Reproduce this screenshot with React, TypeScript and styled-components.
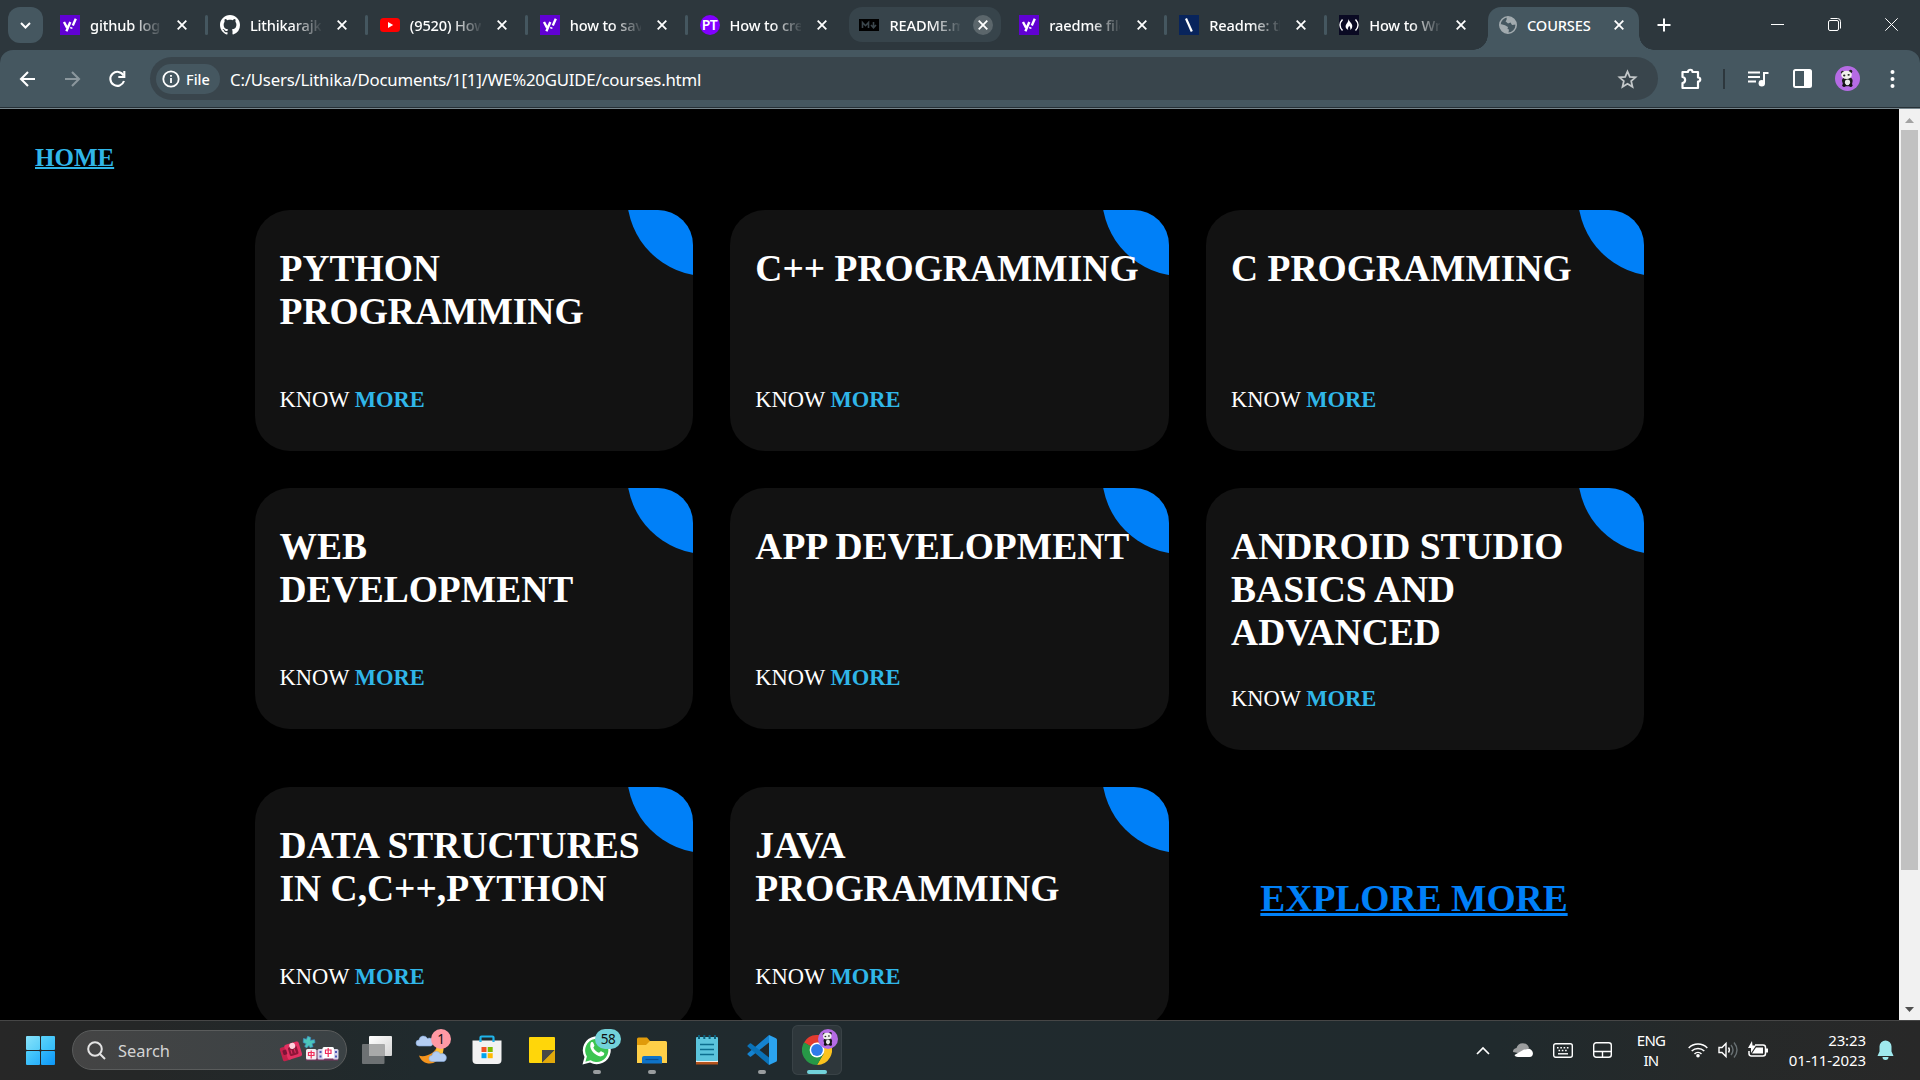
import React from "react";
import styled, { createGlobalStyle } from "styled-components";

const ui = `"Noto Sans", "Open Sans", sans-serif`;

const Global = createGlobalStyle`
  html, body { margin: 0; padding: 0; background: #000; overflow: hidden; }
  * { box-sizing: border-box; }
  svg { display: block; flex: none; }
`;

const Screen = styled.div`
  width: 1920px;
  height: 1080px;
  display: flex;
  flex-direction: column;
  overflow: hidden;
  background: #2d373d;
  font-family: ${ui};
  color: #fff;
`;

/* ---------- tab strip ---------- */
const TabStrip = styled.header`
  height: 50px;
  flex: none;
  display: flex;
  align-items: flex-start;
  padding-left: 8px;
`;
const TabSearch = styled.button`
  width: 35px;
  height: 36px;
  margin: 7px 7px 0 0;
  padding: 0;
  border: 0;
  border-radius: 12px;
  background: #455760;
  display: flex;
  align-items: center;
  justify-content: center;
`;
const TabBox = styled.div<{ $hover?: boolean }>`
  width: 152px;
  height: 35px;
  margin: 7px 7.9px 0 0;
  padding-left: 10px;
  border-radius: 13px;
  background: ${(p) => (p.$hover ? "#37444b" : "transparent")};
  display: flex;
  align-items: center;
  flex: none;
`;
const ActiveTab = styled.div`
  position: relative;
  width: 151px;
  height: 43px;
  margin-top: 7px;
  margin-left: -1px;
  padding: 0 0 7px 11px;
  border-radius: 13px 13px 0 0;
  background: #455760;
  display: flex;
  align-items: center;
  flex: none;
  &::before, &::after {
    content: "";
    position: absolute;
    bottom: 0;
    width: 15px;
    height: 15px;
  }
  &::before {
    left: -15px;
    background: radial-gradient(circle at 0 0, transparent 14.5px, #455760 15px);
  }
  &::after {
    right: -15px;
    background: radial-gradient(circle at 100% 0, transparent 14.5px, #455760 15px);
  }
`;
const TabLabel = styled.span<{ $full?: boolean }>`
  width: 71px;
  margin-left: 10px;
  overflow: hidden;
  white-space: nowrap;
  font-size: 14.6px;
  line-height: 20px;
  font-weight: 500;
  letter-spacing: ${(p) => (p.$full ? "-0.15px" : "-0.15px")};
  ${(p) => (p.$full ? "" : "mask-image: linear-gradient(90deg, #000 42px, transparent 73px);")}
`;
const CloseDot = styled.span<{ $hover?: boolean }>`
  width: 20px;
  height: 20px;
  margin-left: ${(p) => (p.$hover ? "12.5px" : "11.2px")};
  border-radius: 50%;
  background: ${(p) => (p.$hover ? "#5b666b" : "transparent")};
  display: flex;
  align-items: center;
  justify-content: center;
`;
const Divider = styled.i<{ $hidden?: boolean }>`
  width: 3px;
  height: 20px;
  margin-right: -6px;
  margin-left: auto;
  border-radius: 2px;
  background: ${(p) => (p.$hidden ? "transparent" : "#455760")};
`;
const NewTab = styled.div`
  margin: 18px 0 0 18px;
`;
const WindowButtons = styled.div`
  margin: 18px 22px 0 auto;
  display: flex;
  gap: 44px;
`;

/* ---------- favicons ---------- */
const Favicon = styled.span<{ $bg: string; $round?: boolean; $size: number }>`
  width: 20px;
  height: 20px;
  flex: none;
  border-radius: ${(p) => (p.$round ? "50%" : "0")};
  background: ${(p) => p.$bg};
  font: 600 ${(p) => p.$size}px/20px ${ui};
  letter-spacing: -0.6px;
  text-align: center;
  display: flex;
  align-items: center;
  justify-content: center;
`;

/* ---------- toolbar ---------- */
const Toolbar = styled.div`
  height: 59px;
  flex: none;
  display: flex;
  align-items: center;
  padding: 0 18px 1px 17px;
  border-radius: 13px 13px 0 0;
  background: #455760;
  border-bottom: 1px solid #76858c;
  box-shadow: inset 0 -1px 0 #263036;
`;
const NavIcons = styled.div`
  width: 133px;
  flex: none;
  display: flex;
  gap: 21.5px;
  align-items: center;
`;
const AddressBar = styled.div`
  width: 1508px;
  height: 43px;
  flex: none;
  display: flex;
  align-items: center;
  padding: 0 20px 0 6px;
  border-radius: 22px;
  background: #39454c;
`;
const FileChip = styled.div`
  width: 64px;
  height: 30px;
  padding-left: 6px;
  border-radius: 15px;
  background: #455760;
  display: flex;
  align-items: center;
  gap: 6px;
  font-size: 14.5px;
  font-weight: 500;
`;
const Url = styled.span`
  flex: 1;
  margin-left: 10px;
  padding-top: 1px;
  font-size: 16.8px;
  letter-spacing: -0.2px;
  white-space: nowrap;
`;
const ToolIcons = styled.div`
  flex: 1;
  display: flex;
  align-items: center;
  padding-left: 21px;
`;
const ToolDivider = styled.i`
  width: 2px;
  height: 20px;
  margin: 0 23px 0 20px;
  background: #2d373d;
`;
const ToolSlot = styled.span<{ $gap: number }>`
  margin-left: ${(p) => p.$gap}px;
`;

/* ---------- page ---------- */
const Viewport = styled.div`
  height: 911px;
  flex: none;
  display: flex;
  overflow: hidden;
  background: #000;
`;
const Page = styled.main`
  width: 1899px;
  height: 911px;
  overflow: hidden;
  font-family: "Liberation Serif", "Times New Roman", serif;
`;
const HomeLink = styled.a`
  display: block;
  width: max-content;
  height: 29px;
  margin: 34px 0 37.9px 35px;
  font-size: 25px;
  line-height: 29px;
  font-weight: 700;
  color: #30b6e8;
  text-decoration: underline 2px;
`;
const Courses = styled.section`
  width: 1427.5px;
  margin: 0 auto;
  display: flex;
  flex-wrap: wrap;
  align-items: flex-start;
`;
const Card = styled.article`
  position: relative;
  width: 438.3px;
  margin: 0 18.75px 37.5px;
  padding: 37px 25px 38.2px;
  border-radius: 35px;
  overflow: hidden;
  background: #121212;
`;
const Bubble = styled.i`
  position: absolute;
  top: -93.75px;
  right: -93.75px;
  width: 160px;
  height: 160px;
  border-radius: 50%;
  background: #0080f8;
`;
const CardTitle = styled.h2`
  position: relative;
  min-height: 108.75px;
  margin: 0 0 31.25px;
  font-size: 37.5px;
  line-height: 43.2px;
  font-weight: 700;
`;
const Know = styled.p`
  position: relative;
  margin: 0;
  font-size: 22.5px;
  line-height: 25.5px;
  b { color: #30b6e8; }
`;
const Explore = styled.a`
  margin: 90.2px 0 0 73px;
  font-size: 37.5px;
  line-height: 43.2px;
  font-weight: 700;
  color: #0080f8;
  text-decoration: underline 3px;
`;
const Scrollbar = styled.aside`
  width: 21px;
  display: flex;
  flex-direction: column;
  align-items: center;
  justify-content: space-between;
  background: #f1f1f1;
  padding: 9px 0 8px;
`;
const Thumb = styled.i`
  width: 17px;
  height: 740px;
  margin-bottom: auto;
  margin-top: 7px;
  background: #c1c1c1;
`;

/* ---------- taskbar ---------- */
const Taskbar = styled.footer`
  height: 60px;
  flex: none;
  display: flex;
  align-items: center;
  padding-bottom: 1px;
  border-top: 1px solid #464646;
  background: linear-gradient(90deg, #272727 0, #252727 140px, #202a2d 420px, #202a2e 800px, #202a2d 1500px, #262929 1720px, #282828 1920px);
`;
const Start = styled.div`
  width: 29px;
  height: 29px;
  margin: 0 17px 0 26px;
  display: grid;
  grid-template-columns: 1fr 1fr;
  gap: 1px;
  flex: none;
  i { border-radius: 1px; }
  i:nth-child(1) { background: linear-gradient(135deg, #86e2fb, #56cdf9); }
  i:nth-child(2) { background: linear-gradient(135deg, #5bd2fa, #32bbfa); }
  i:nth-child(3) { background: linear-gradient(135deg, #4fcffb, #28aefa); }
  i:nth-child(4) { background: linear-gradient(135deg, #33b9fb, #0d97f8); }
`;
const SearchBox = styled.div`
  width: 275px;
  height: 40px;
  flex: none;
  display: flex;
  align-items: center;
  padding: 0 7px 0 14px;
  border-radius: 20px;
  border: 1px solid #5a5c5c;
  background: linear-gradient(90deg, #444444, #3b4245);
  font-size: 16.4px;
  color: #d4d4d4;
  span { flex: 1; margin-left: 12px; }
`;
const Apps = styled.div`
  display: flex;
  margin-left: 2.5px;
`;
const AppSlot = styled.div<{ $active?: boolean }>`
  position: relative;
  width: 50px;
  height: 50px;
  margin: 0 2.5px;
  border-radius: 6px;
  background: ${(p) => (p.$active ? "#2e373b" : "transparent")};
  box-shadow: ${(p) => (p.$active ? "inset 0 0 0 1px #394246" : "none")};
  display: flex;
  align-items: center;
  justify-content: center;
`;
const Running = styled.i<{ $active?: boolean }>`
  position: absolute;
  bottom: 1px;
  left: ${(p) => (p.$active ? "15px" : "21px")};
  width: ${(p) => (p.$active ? "20px" : "8px")};
  height: 4px;
  border-radius: 2px;
  background: ${(p) => (p.$active ? "#72d2da" : "#999d9f")};
`;
const Badge = styled.b<{ $color: string; $w: number; $x: number; $y: number }>`
  position: absolute;
  top: ${(p) => p.$y}px;
  left: ${(p) => p.$x}px;
  width: ${(p) => p.$w}px;
  height: 20px;
  border-radius: 10px;
  background: ${(p) => p.$color};
  color: #111;
  font: 400 13.5px/20px ${ui};
  letter-spacing: -0.4px;
  text-align: center;
`;
const AvatarBadge = styled.span`
  position: absolute;
  top: 4px;
  left: 26px;
`;
const Tray = styled.div`
  margin-left: auto;
  display: flex;
  align-items: center;
  padding-right: 26px;
  font-size: 15px;
  line-height: 20px;
`;
const Language = styled.div`
  width: 34px;
  margin: 0 20px 0 13px;
  text-align: center;
  letter-spacing: -0.8px;
`;
const Clock = styled.div`
  width: 84px;
  margin: 0 11px 0 14px;
  display: flex;
  flex-direction: column;
  align-items: flex-end;
  white-space: nowrap;
  letter-spacing: -0.1px;
`;
const TraySlot = styled.span<{ $w: number }>`
  width: ${(p) => p.$w}px;
  display: flex;
  justify-content: center;
`;

const line = { fill: "none", stroke: "#fff", strokeLinecap: "butt" as const };

const Cross = () => (
  <svg width="10" height="10" viewBox="0 0 10 10" {...line} strokeWidth="1.8"><path d="M.7.7l8.6 8.6M9.3.7L.7 9.3" /></svg>
);
const Github = () => (
  <svg width="20" height="20" viewBox="0 0 16 16" fill="#fff">
    <path d="M8 0C3.58 0 0 3.58 0 8c0 3.54 2.29 6.53 5.47 7.59.4.07.55-.17.55-.38 0-.19-.01-.82-.01-1.49-2.01.37-2.53-.49-2.69-.94-.09-.23-.48-.94-.82-1.13-.28-.15-.68-.52-.01-.53.63-.01 1.08.58 1.23.82.72 1.21 1.87.87 2.33.66.07-.52.28-.87.51-1.07-1.78-.2-3.64-.89-3.64-3.95 0-.87.31-1.59.82-2.15-.08-.2-.36-1.02.08-2.12 0 0 .67-.21 2.2.82.64-.18 1.32-.27 2-.27s1.36.09 2 .27c1.53-1.04 2.2-.82 2.2-.82.44 1.1.16 1.92.08 2.12.51.56.82 1.27.82 2.15 0 3.07-1.87 3.75-3.65 3.95.29.25.54.73.54 1.48 0 1.07-.01 1.93-.01 2.2 0 .21.15.46.55.38A8.01 8.01 0 0 0 16 8c0-4.42-3.58-8-8-8z" />
  </svg>
);
const Youtube = () => (
  <svg width="20" height="20" viewBox="0 0 20 20"><rect y="3" width="20" height="14" rx="3.5" fill="#f00" /><path d="M8 7l5.2 3L8 13z" fill="#fff" /></svg>
);
const Yahoo = () => (
  <Favicon $bg="#6001d2" $size={15}>
    <svg width="20" height="20" viewBox="0 0 20 20" {...line} strokeWidth="2.4"><path d="M4 7l3 5.6M10.3 7L6.4 16.2M15.8 3.8l-3 6.6M11.6 12.2l-.6 1.4" /></svg>
  </Favicon>
);
const Markdown = () => (
  <svg width="20" height="20" viewBox="0 0 20 20">
    <rect y="4" width="20" height="12" fill="#000" />
    <path d="M3.5 13V7.5l3 3.2 3-3.2V13M14.5 7v5M12 10l2.5 2.8L17 10" fill="none" stroke="#3c484e" strokeWidth="1.6" />
  </svg>
);
const Slash = () => (
  <Favicon $bg="#08245c" $size={12}>
    <svg width="20" height="20" viewBox="0 0 20 20"><path d="M7 3.5l5.8 13" stroke="#fff" strokeWidth="2.2" /></svg>
  </Favicon>
);
const Camp = () => (
  <Favicon $bg="#0a0a23" $size={12}>
    <svg width="20" height="20" viewBox="0 0 20 20" {...line} strokeWidth="1.4">
      <path d="M3.500 4.500C.3 8 .3 12 3.500 15.500M16.500 4.500C19.700 8 19.700 12 16.500 15.500" />
      <path d="M9.500 4c.5 3 4.500 4.500 3.700 8-.3 1.700-1.500 2.600-2.200 2.800 1-2-.2-3-.8-4-.6 1.500-2 2.500-.9 4-1.800-.5-3.200-2-2.600-4.200C7.300 8.500 9.500 7 9.500 4z" fill="#fff" stroke="none" />
    </svg>
  </Favicon>
);
const Globe = () => (
  <svg width="18" height="18" viewBox="0 0 18 18">
    <circle cx="9" cy="9" r="8.200" fill="#455760" stroke="#a2abaf" strokeWidth="1.600" />
    <path d="M1.500 8l4.500 1.200 3 1.800-.5 2 1.500.5-.6 3.700C5 17.500 1 14 1 9zM8 1c-.8 1.500.5 2.500-1.500 4.300L9 7.500l2.500-1 1.500 2.500 4-.5C16.500 3.500 13 .5 8 1z" fill="#a2abaf" />
  </svg>
);
const Panda = ({ size }: { size: number }) => (
  <svg width={size} height={size} viewBox="0 0 26 26">
    <circle cx="13" cy="13" r="13" fill="#b56be4" />
    <path d="M7.500 16.500c-1-3 1.500-4.500 3.500-4.500h4c3 0 4 3 3 5.500l-.8 3.500H9z" fill="#1a1a1a" />
    <circle cx="8" cy="6.800" r="1.800" fill="#222" /><circle cx="16.200" cy="5.800" r="1.800" fill="#222" />
    <ellipse cx="12" cy="9.300" rx="5.500" ry="4.300" fill="#f0f0ec" />
    <ellipse cx="9.600" cy="9.800" rx="1.200" ry="1" fill="#222" /><ellipse cx="14.200" cy="9.200" rx="1.200" ry="1" fill="#222" />
    <ellipse cx="13" cy="17" rx="2.700" ry="3" fill="#e6e6e6" />
    <circle cx="9.400" cy="20" r="1.800" fill="#111" /><circle cx="16.400" cy="20" r="1.800" fill="#111" />
  </svg>
);

const tabs = [
  { icon: <Yahoo />, label: "github log" },
  { icon: <Github />, label: "Lithikarajk" },
  { icon: <Youtube />, label: "(9520) How" },
  { icon: <Yahoo />, label: "how to sav" },
  { icon: <Favicon $bg="#8200ff" $round $size={14}>PT</Favicon>, label: "How to cre", last: true },
  { icon: <Markdown />, label: "README.m", hover: true, last: true },
  { icon: <Yahoo />, label: "raedme file" },
  { icon: <Slash />, label: "Readme: th" },
  { icon: <Camp />, label: "How to Wr", last: true },
];

const courses = [
  "PYTHON PROGRAMMING",
  "C++ PROGRAMMING",
  "C PROGRAMMING",
  "WEB DEVELOPMENT",
  "APP DEVELOPMENT",
  "ANDROID STUDIO BASICS AND ADVANCED",
  "DATA STRUCTURES IN C,C++,PYTHON",
  "JAVA PROGRAMMING",
];

const Games = () => (
  <svg width="60" height="30" viewBox="0 0 60 30">
    <g transform="rotate(-17 12 17)">
      <rect x="2" y="10" width="9" height="14" rx="1.500" fill="#c4214b" />
      <rect x="7" y="8.500" width="15" height="15.500" rx="2" fill="#e33162" />
      <rect x="4" y="13" width="4" height="5" rx="1" fill="#7b1437" />
      <rect x="10" y="12" width="9" height="9" rx="1.500" fill="#8d1638" />
      <path d="M12.500 15v4M16 15v4" stroke="#e33162" strokeWidth="1" />
      <circle cx="15" cy="11.500" r="3" fill="#ffd1dc" />
    </g>
    <path d="M24.500 3.500l3 .8 1.200-3 3 1.200-.4 2.800 4.200-.6.500 3-3 1 1 3-3 .8-1-2-2.500 2.500-1.800-1.800 1.500-2.500-3-1.200z" fill="#4cc6bb" stroke="#3b8fc4" strokeWidth=".7" />
    <path d="M27 15h32v10.500H27z" fill="#79355f" />
    <rect x="27" y="14" width="10.500" height="10.500" rx="1.500" fill="#f5eef3" />
    <rect x="38.500" y="14" width="7" height="10.500" rx="1.500" fill="#d5d3ea" />
    <rect x="54" y="14" width="5.500" height="10.500" rx="1.500" fill="#d5d3ea" />
    <rect x="43.500" y="12" width="11.500" height="11.500" rx="1.500" fill="#fff" />
    <path d="M29.500 17.500h5.500v3h-5.500zM32.200 15.500v8M46.500 15h5.500v3.500h-5.500zM49.200 13v9" fill="none" stroke="#f02c5b" strokeWidth="1.200" />
    <path d="M40.500 17h2M40.500 21.500h2M56 17h2M56 21.500h2" stroke="#4e58b5" strokeWidth="2" />
  </svg>
);

const TaskView = () => (
  <svg width="30" height="28" viewBox="0 0 30 28">
    <defs><linearGradient id="tv" x2="1" y2="1"><stop stopColor="#fff" /><stop offset="1" stopColor="#d4d4d4" /></linearGradient></defs>
    <rect x="7" y="0" width="23" height="20" rx="1" fill="url(#tv)" />
    <rect x="0" y="8" width="22.500" height="20" rx="1" fill="#6d7173" /><path d="M7 8h15.500v12H7z" fill="#a8a9a9" />
  </svg>
);
const Cloud = ({ x, y }: { x: number; y: number }) => (
  <path transform={`translate(${x} ${y})`} d="M3 11a3 3 0 0 1 0-6A4.500 4.500 0 0 1 11.500 3.500 3.800 3.800 0 0 1 15 11z" fill="#b3cdf2" stroke="#87a9dc" strokeWidth=".6" />
);
const Weather = () => (
  <svg width="34" height="34" viewBox="0 0 34 34">
    <Cloud x={1} y={2} />
    <path d="M28 12c2 8-4 18-13 18.500-5 0-9-2.500-11-8 3 1.500 9 .5 13-2.500s5-5.500 5-8z" fill="#f5941d" />
    <path d="M28 12c1 5 0 9-2 12l-7-3c2-2.500 3-5.500 3-9z" fill="#fdc33c" />
    <Cloud x={14} y={17.500} />
  </svg>
);
const Store = () => (
  <svg width="30" height="30" viewBox="0 0 30 30">
    <path d="M.5 5.500h29V25a4 4 0 0 1-4 4h-21a4 4 0 0 1-4-4z" fill="#f2f2f2" />
    <path d="M8.500 7V2.500a1 1 0 0 1 1-1h11a1 1 0 0 1 1 1V7" fill="none" stroke="#1fb4ea" strokeWidth="2.200" />
    <path d="M9.500 12h5v5h-5z" fill="#f25022" /><path d="M15.700 12h5v5h-5z" fill="#7fba00" />
    <path d="M9.500 18.200h5v5h-5z" fill="#00a4ef" /><path d="M15.700 18.200h5v5h-5z" fill="#ffb900" />
  </svg>
);
const Sticky = () => (
  <svg width="26" height="26" viewBox="0 0 26 26"><rect width="26" height="26" rx="1" fill="#ffd60a" /><path d="M13 13h13L13 26z" fill="#474747" /><path d="M26 13v13H13z" fill="#e2a90b" /></svg>
);
const Whatsapp = () => (
  <svg width="30" height="30" viewBox="0 0 30 30">
    <path d="M.5 29.500l2-7.500A14 14 0 1 1 8 27.500z" fill="#fff" />
    <path d="M3.400 26.700l1.500-5.200A11.600 11.600 0 1 1 8.600 25.200z" fill="#3cc551" />
    <path d="M9 7.500c1-.8 2-.6 2.400.4l1 2.600c.2.700-1.200 1.800-1 2.200 1.200 2.500 3 4 5.500 5 .6.200 1.500-1.700 2.200-1.400l2.800 1.400c.8.400.2 2.200-.7 2.900-5 3.500-14.500-5.500-12.800-11 .1-.8.2-1.700.6-2.100z" fill="#fff" />
  </svg>
);
const Folder = () => (
  <svg width="30" height="27" viewBox="0 0 30 27">
    <path d="M0 2a1.500 1.500 0 0 1 1.500-1.500H10L13 4v4H0z" fill="#e09b0b" />
    <path d="M0 8h9l4-4h15.500A1.500 1.500 0 0 1 30 5.500V26H0z" fill="#ffcf48" />
    <path d="M5 26.500V21a2 2 0 0 1 2-2h16a2 2 0 0 1 2 2v5.500z" fill="#0f73c8" /><path d="M8.500 22.500h13" stroke="#0a4f93" strokeWidth="1.200" />
  </svg>
);
const Notepad = () => (
  <svg width="22" height="30" viewBox="0 0 22 30">
    <path d="M0 25h22v4.500H0z" fill="#b5531c" /><path d="M0 25h22v2H0z" fill="#f2ece6" />
    <rect y="2" width="22" height="24" rx="1" fill="#5bc4dc" />
    <path d="M3 0v4M8.300 0v4M13.600 0v4M19 0v4" stroke="#0d5f7a" strokeWidth="2" />
    <path d="M4 9.500h14M4 14.500h14M4 19.500h14" stroke="#0c6e8e" strokeWidth="1.700" />
  </svg>
);
const Code = () => (
  <svg width="30" height="30" viewBox="0 0 30 30">
    <path d="M22 7.500V0L.8 18.200a1 1 0 0 0 0 1.500l2 1.700a1 1 0 0 0 1.300 0z" fill="#1583d0" />
    <path d="M22 22.500V30L.8 11.800a1 1 0 0 1 0-1.500l2-1.700a1 1 0 0 1 1.300 0z" fill="#0a72b8" />
    <path d="M22 0l6.500 3a2 2 0 0 1 1.500 2v20a2 2 0 0 1-1.500 2L22 30z" fill="#2ba3ef" />
  </svg>
);
const Chrome = () => (
  <svg width="30" height="30" viewBox="0 0 30 30">
    <path d="M15 15L2 7.500A15 15 0 0 1 28 7.500z" fill="#e33b2e" /><path d="M15 15L2 7.500A15 15 0 0 0 15 30z" fill="#279847" />
    <path d="M15 7.500h13A15 15 0 0 1 15 30l6.500-11.200z" fill="#fcc31e" /><path d="M2 7.500l6.500 11.300L15 30l6.600-11.200L15 15z" fill="#279847" />
    <circle cx="15" cy="15" r="7.400" fill="#fff" /><circle cx="15" cy="15" r="5.900" fill="#2f7bea" />
  </svg>
);

export default function App() {
  return (
    <>
      <Global />
      <Screen>
        <TabStrip>
          <TabSearch><svg width="11" height="7" viewBox="0 0 11 7" {...line} strokeWidth="2"><path d="M1 1l4.500 4.500L10 1" /></svg></TabSearch>
          {tabs.map((t, i) => (
            <TabBox key={i} $hover={t.hover}>
              {t.icon}
              <TabLabel>{t.label}</TabLabel>
              <CloseDot $hover={t.hover}><Cross /></CloseDot>
              <Divider $hidden={t.last} />
            </TabBox>
          ))}
          <ActiveTab>
            <Globe />
            <TabLabel $full>COURSES</TabLabel>
            <CloseDot><Cross /></CloseDot>
          </ActiveTab>
          <NewTab><svg width="14" height="14" viewBox="0 0 14 14" {...line} strokeWidth="2"><path d="M7 .5v13M.5 7h13" /></svg></NewTab>
          <WindowButtons>
            <svg width="13" height="13" viewBox="0 0 13 13" {...line}><path d="M0 6.500h13" /></svg>
            <svg width="13" height="13" viewBox="0 0 13 13" {...line}><rect x=".5" y="2.500" width="10" height="10" rx="1.500" /><path d="M2.500.5h7a3 3 0 0 1 3 3v7" /></svg>
            <svg width="13" height="13" viewBox="0 0 13 13" {...line}><path d="M.3.3l12.400 12.400M12.700.3L.3 12.700" /></svg>
          </WindowButtons>
        </TabStrip>

        <Toolbar>
          <NavIcons>
            <svg width="22" height="22" viewBox="0 0 22 22" {...line} strokeWidth="2.100"><path d="M18 11H4.500M11 4l-7 7 7 7" /></svg>
            <svg width="22" height="22" viewBox="0 0 22 22" {...line} stroke="#8b979d" strokeWidth="2.100"><path d="M4 11h13.500M11 4l7 7-7 7" /></svg>
            <svg width="26" height="22" viewBox="0 0 26 22" {...line} strokeWidth="2.100"><path d="M19.500 7.500A7 7 0 1 0 20 13" /><path d="M20.300 3v6h-6" /></svg>
          </NavIcons>
          <AddressBar>
            <FileChip>
              <svg width="18" height="18" viewBox="0 0 18 18" {...line} strokeWidth="1.800"><circle cx="9" cy="9" r="7.700" /><path d="M9 8v5M9 5v1.800" /></svg>
              File
            </FileChip>
            <Url>C:/Users/Lithika/Documents/1[1]/WE%20GUIDE/courses.html</Url>
            <svg width="21" height="20" viewBox="0 0 21 20" fill="none" stroke="#c3c7c9" strokeWidth="1.800"><path d="M10.500 2.500l2.300 5.300 5.700.5-4.300 3.800 1.300 5.700-5-3-5 3 1.300-5.700L2.500 8.300l5.700-.5z" /></svg>
          </AddressBar>
          <ToolIcons>
            <svg width="24" height="24" viewBox="0 0 24 24" {...line} strokeWidth="2.200"><path d="M3.500 5h5.500c0-3 4.500-3 4.500 0H19v5.500c3 0 3 4 0 4V21H3.500v-5c3.500-.5 3.500-5.500 0-6z" strokeLinejoin="round" /></svg>
            <ToolDivider />
            <svg width="21" height="18" viewBox="0 0 21 18" {...line} strokeWidth="2"><path d="M0 2.500h12M0 7h12M0 11.500h8M16 13.500V3h4.500" /><circle cx="13.800" cy="13.300" r="3.200" fill="#fff" stroke="none" /></svg>
            <ToolSlot $gap={24}><svg width="19" height="19" viewBox="0 0 19 19"><rect x="1" y="1" width="17" height="17" rx="1.500" fill="none" stroke="#fff" strokeWidth="2" /><path d="M11 1h7v17h-7z" fill="#fff" /></svg></ToolSlot>
            <ToolSlot $gap={23}><Panda size={25} /></ToolSlot>
            <ToolSlot $gap={30}><svg width="5" height="20" viewBox="0 0 5 20" fill="#fff"><circle cx="2.500" cy="3" r="2" /><circle cx="2.500" cy="10" r="2" /><circle cx="2.500" cy="17" r="2" /></svg></ToolSlot>
          </ToolIcons>
        </Toolbar>

        <Viewport>
          <Page>
            <HomeLink>HOME</HomeLink>
            <Courses>
              {courses.map((c) => (
                <Card key={c}>
                  <Bubble />
                  <CardTitle>{c}</CardTitle>
                  <Know>KNOW <b>MORE</b></Know>
                </Card>
              ))}
              <Explore>EXPLORE MORE</Explore>
            </Courses>
          </Page>
          <Scrollbar>
            <svg width="9" height="5" viewBox="0 0 9 5"><path d="M0 5L4.500 0 9 5z" fill="#a3a3a3" /></svg>
            <Thumb />
            <svg width="9" height="5" viewBox="0 0 9 5"><path d="M0 0h9L4.500 5z" fill="#505050" /></svg>
          </Scrollbar>
        </Viewport>

        <Taskbar>
          <Start><i /><i /><i /><i /></Start>
          <SearchBox>
            <svg width="19" height="19" viewBox="0 0 19 19" fill="none" stroke="#e4e4e4" strokeWidth="2"><circle cx="8" cy="8" r="6.800" /><path d="M13 13l5 5" /></svg>
            <span>Search</span>
            <Games />
          </SearchBox>
          <Apps>
            <AppSlot><TaskView /></AppSlot>
            <AppSlot><Weather /><Badge $color="#ff99a4" $w={20} $x={24} $y={4}>1</Badge></AppSlot>
            <AppSlot><Store /></AppSlot>
            <AppSlot><Sticky /></AppSlot>
            <AppSlot><Whatsapp /><Badge $color="#72d2da" $w={26} $x={23} $y={4}>58</Badge><Running /></AppSlot>
            <AppSlot><Folder /><Running /></AppSlot>
            <AppSlot><Notepad /></AppSlot>
            <AppSlot><Code /><Running /></AppSlot>
            <AppSlot $active><Chrome /><AvatarBadge><Panda size={20} /></AvatarBadge><Running $active /></AppSlot>
          </Apps>
          <Tray>
            <TraySlot $w={40}><svg width="14" height="9" viewBox="0 0 14 9" {...line} strokeWidth="1.700"><path d="M1 8l6-6 6 6" /></svg></TraySlot>
            <TraySlot $w={40}><svg width="20" height="14" viewBox="0 0 20 14"><path d="M0 9a4 4 0 0 1 3.500-4A6.500 6.500 0 0 1 16 5l-6 6z" fill="#9b9d9e" /><path d="M1.500 12L11 6.500c3 0 4-1.500 6-.5 4 2 4 8-.5 8H5c-2 0-3-1-3.500-2z" fill="#fff" /></svg></TraySlot>
            <TraySlot $w={40}><svg width="20" height="15" viewBox="0 0 20 15" {...line} strokeWidth="1.400"><rect x=".7" y=".7" width="18.600" height="13.600" rx="2" /><path d="M4 4.700h12M5.500 7.500h9" strokeDasharray="1.600 1.700" /><path d="M5 10.800h10" /></svg></TraySlot>
            <TraySlot $w={38}><svg width="19" height="16" viewBox="0 0 19 16" {...line} strokeWidth="1.400"><rect x=".7" y=".7" width="17.600" height="14.600" rx="2.500" /><path d="M1 9.500h17M9.500 9.500V15" /></svg></TraySlot>
            <Language>ENG<br />IN</Language>
            <TraySlot $w={20}><svg width="20" height="16" viewBox="0 0 20 16" {...line} strokeWidth="1.500"><path d="M.7 6a13 13 0 0 1 18.600 0M3.700 9a9 9 0 0 1 12.600 0M6.500 12a5 5 0 0 1 7 0" /><circle cx="10" cy="13.700" r="1.800" fill="#fff" stroke="none" /></svg></TraySlot>
            <TraySlot $w={40}><svg width="20" height="18" viewBox="0 0 20 18" {...line} strokeWidth="1.400"><path d="M1 6.500h3L8 2.500v13l-4-4H1zM10.500 6.500q1.800 2.500 0 5" /><path d="M13 4q4 5 0 10M16 1.500q6 7.500 0 15" stroke="#687073" /></svg></TraySlot>
            <TraySlot $w={20}><svg width="20" height="18" viewBox="0 0 20 18" {...line} strokeWidth="1.500"><path d="M7 4h8a2.500 2.500 0 0 1 2.500 2.500v6A2.500 2.500 0 0 1 15 15H3a2.500 2.500 0 0 1-2-2.500V10" /><path d="M8 6.500h7v6H4z" fill="#fff" stroke="none" /><path d="M4 0L0 7h3v5l5-7.500H4.500z" fill="#fff" stroke="none" /><path d="M19 7.500v4" strokeWidth="2" /></svg></TraySlot>
            <Clock><span>23:23</span><span>01-11-2023</span></Clock>
            <svg width="17" height="20" viewBox="0 0 17 20" fill="#9fe9ee"><path d="M8.500.5a6 6 0 0 1 6 6v5l2 4.500H.5l2-4.500v-5a6 6 0 0 1 6-6zM5.500 17h6a3 3 0 0 1-6 0z" /></svg>
          </Tray>
        </Taskbar>
      </Screen>
    </>
  );
}
